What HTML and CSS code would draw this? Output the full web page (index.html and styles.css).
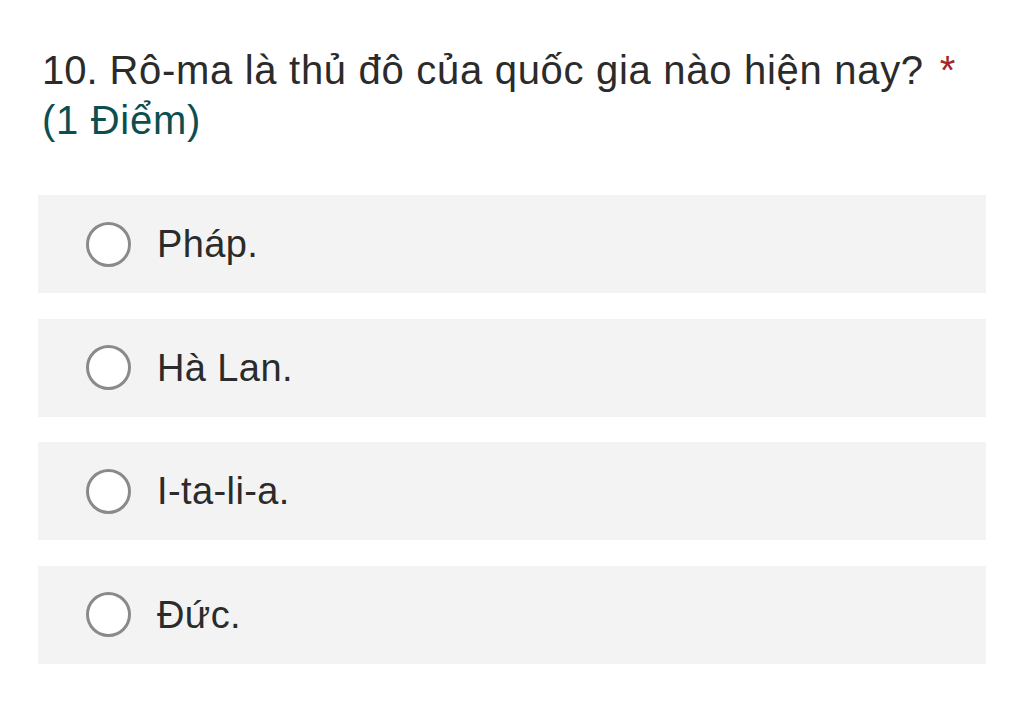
FILE: index.html
```html
<!DOCTYPE html>
<html lang="vi">
<head>
<meta charset="utf-8">
<link rel="stylesheet" href="styles.css">
</head>
<body>
<div class="question">
  <div class="title"><span class="num">10.</span> Rô-ma là thủ đô của quốc gia nào hiện nay? <span class="req">*</span></div>
  <div class="points">(1 Điểm)</div>
</div>
<div class="options">
  <div class="option"><span class="radio"></span><span class="label">Pháp.</span></div>
  <div class="option"><span class="radio"></span><span class="label">Hà Lan.</span></div>
  <div class="option"><span class="radio"></span><span class="label">I-ta-li-a.</span></div>
  <div class="option"><span class="radio"></span><span class="label">Đức.</span></div>
</div>
</body>
</html>
```
FILE: styles.css
```css
html, body {
  margin: 0;
  padding: 0;
  background: #ffffff;
}
body {
  width: 1024px;
  height: 714px;
  overflow: hidden;
  font-family: "Liberation Sans", Arial, sans-serif;
  color: #2b2b2b;
}
.question {
  padding: 45px 0 0 42px;
  font-size: 40px;
  line-height: 50px;
  letter-spacing: 0.7px;
}
.num {
  letter-spacing: 0;
}
.req {
  color: #a4262c;
  margin-left: 4px;
}
.points {
  color: #0d4f4f;
}
.options {
  margin: 50px 0 0 38px;
  width: 948px;
  display: flex;
  flex-direction: column;
  gap: 25.6px;
}
.option {
  height: 98px;
  background: #f3f3f3;
  display: flex;
  align-items: center;
  padding-left: 48px;
  box-sizing: border-box;
}
.radio {
  width: 45px;
  height: 45px;
  box-sizing: border-box;
  border: 3.5px solid #8a8a8a;
  border-radius: 50%;
  background: #ffffff;
  flex: none;
}
.label {
  margin-left: 26px;
  font-size: 38px;
  line-height: 44px;
  letter-spacing: 0.4px;
  color: #2b2b2b;
}
```
